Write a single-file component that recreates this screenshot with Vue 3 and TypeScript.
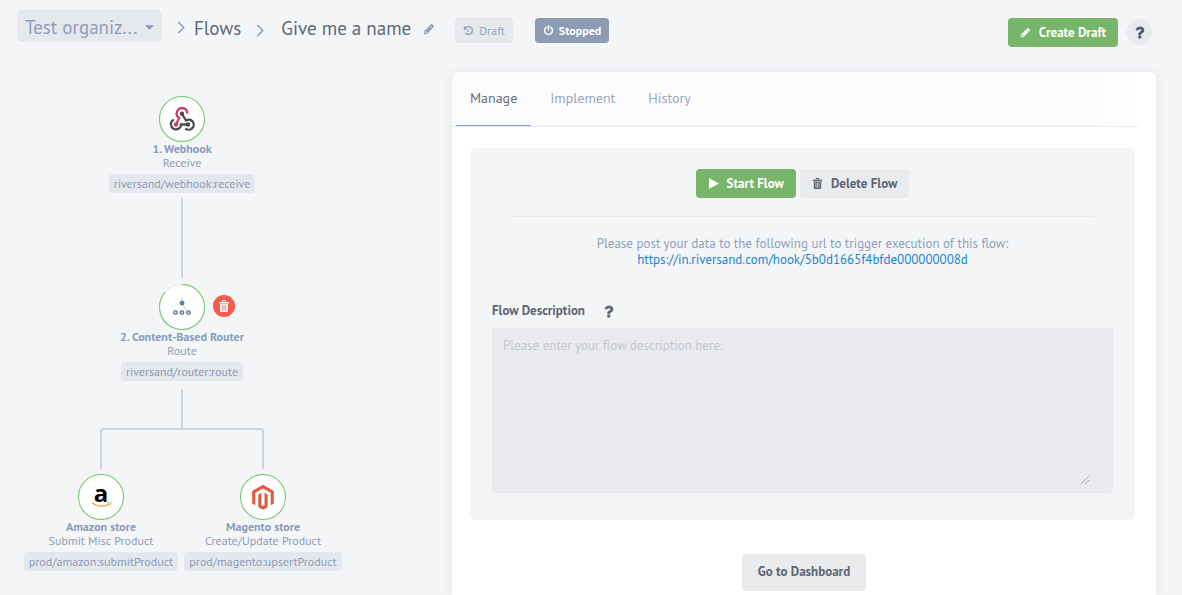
<script setup lang="ts">
import { ref } from 'vue'

interface FlowStep {
  title: string
  action: string
  component: string
  icon: 'webhook' | 'router' | 'amazon' | 'magento'
}

const steps: FlowStep[] = [
  { title: '1. Webhook', action: 'Receive', component: 'riversand/webhook:receive', icon: 'webhook' },
  { title: '2. Content-Based Router', action: 'Route', component: 'riversand/router:route', icon: 'router' },
]
const targets: FlowStep[] = [
  { title: 'Amazon store', action: 'Submit Misc Product', component: 'prod/amazon:submitProduct', icon: 'amazon' },
  { title: 'Magento store', action: 'Create/Update Product', component: 'prod/magento:upsertProduct', icon: 'magento' },
]
const rows = [[steps[0]], [steps[1]], targets]

const tabs = ['Manage', 'Implement', 'History']
const activeTab = ref('Manage')
const organization = ref('test')
const description = ref('')

const pencil = 'M491 1536l91-91-235-235-91 91v107h128v128h107zm523-928q0-22-22-22-10 0-17 7l-542 542q-7 7-7 17 0 22 22 22 10 0 17-7l542-542q7-7 7-17zm-54-192l416 416-832 832h-416v-416zm683 96q0 53-37 90l-166 166-416-416 166-165q36-38 90-38 53 0 91 38l235 234q37 39 37 91z'
const history = 'M1664 896q0 156-61 298t-164 245-245 164-298 61q-172 0-327-72.5t-264-204.5q-7-10-6.5-22.5t8.5-20.5l137-138q10-9 25-9 16 2 23 12 73 95 179 147t225 52q104 0 198.5-40.5t163.5-109.5 109.5-163.5 40.5-198.5-40.5-198.5-109.5-163.5-163.5-109.5-198.5-40.5q-98 0-188 35.5t-160 101.5l137 138q31 30 14 69-17 40-59 40h-448q-26 0-45-19t-19-45v-448q0-42 40-59 39-17 69 14l130 129q107-101 244.5-156.5t284.5-55.5q156 0 298 61t245 164 164 245 61 298zm-640-288v448q0 14-9 23t-23 9h-320q-14 0-23-9t-9-23v-64q0-14 9-23t23-9h224v-352q0-14 9-23t23-9h64q14 0 23 9t9 23z'
const power = 'M1664 896q0 156-61 298t-164 245-245 164-298 61-298-61-245-164-164-245-61-298q0-182 80.5-343t226.5-270q43-32 95.5-25t83.5 50q32 42 24.5 94.5t-49.5 84.5q-98 74-151.5 181t-53.5 228q0 104 40.5 198.5t109.5 163.5 163.5 109.5 198.5 40.5 198.5-40.5 163.5-109.5 109.5-163.5 40.5-198.5q0-121-53.5-228t-151.5-181q-42-32-49.5-84.5t24.5-94.5q31-43 84-50t95 25q146 109 226.5 270t80.5 343zm-640-768v640q0 52-38 90t-90 38-90-38-38-90v-640q0-52 38-90t90-38 90 38 38 90z'
const question = 'M1088 1256v240q0 16-12 28t-28 12h-240q-16 0-28-12t-12-28v-240q0-16 12-28t28-12h240q16 0 28 12t12 28zm316-600q0 54-15.5 101t-35 76.5-55 59.5-57.5 43.5-61 35.5q-41 23-68.5 65t-27.5 67q0 17-12 32.5t-28 15.5h-240q-15 0-25.5-18.5t-10.5-37.5v-45q0-83 65-156.5t143-108.5q59-27 84-56t25-76q0-42-46.5-74t-107.5-32q-65 0-108 29-35 25-107 115-13 16-31 16-12 0-25-8l-164-125q-13-10-15.5-25t5.5-28q160-266 464-266 80 0 161 31t146 83 106 127.5 41 158.5z'
</script>

<template>
  <div class="page">
    <header class="topbar">
      <div class="org">
        <select v-model="organization" aria-label="Organization">
          <option value="test">Test organiz...</option>
        </select>
        <svg class="caret" viewBox="0 0 10 5" aria-hidden="true"><path d="M0 0h10L5 5z" /></svg>
      </div>
      <svg class="chevron first" viewBox="0 0 8 14" aria-hidden="true"><path d="M1 1l6 6-6 6" /></svg>
      <a class="crumb" href="#flows">Flows</a>
      <svg class="chevron second" viewBox="0 0 8 14" aria-hidden="true"><path d="M1 1l6 6-6 6" /></svg>
      <h1>Give me a name</h1>
      <button class="rename" type="button" aria-label="Rename flow">
        <svg viewBox="0 0 1792 1792"><path :d="pencil" /></svg>
      </button>
      <span class="badge draft"><svg viewBox="0 0 1792 1792"><path :d="history" /></svg>Draft</span>
      <span class="badge stopped"><svg viewBox="0 0 1792 1792"><path :d="power" /></svg>Stopped</span>
      <div class="actions">
        <button class="btn green create" type="button">
          <svg viewBox="0 0 1792 1792"><path :d="pencil" /></svg>Create Draft
        </button>
        <button class="help" type="button" aria-label="Help">
          <svg viewBox="0 0 1792 1792"><path :d="question" /></svg>
        </button>
      </div>
    </header>

    <div class="body">
      <section class="tree" aria-label="Flow steps">
        <template v-for="(row, index) in rows" :key="index">
          <div v-if="index === 1" class="link"></div>
          <svg v-if="index === 2" class="fork" viewBox="0 0 324 80" aria-hidden="true">
            <path d="M162 0v40M81 80V42q0-2 2-2h158q2 0 2 2v38" />
          </svg>
          <div class="row">
            <div v-for="step in row" :key="step.title" class="step">
              <div class="disc">
                <svg v-if="step.icon === 'webhook'" viewBox="0 0 46 46">
                  <circle class="ring full" cx="23" cy="23" r="22.5" />
                  <g fill="none" stroke-width="2.3">
                    <path stroke="#d03a66" d="M28.300 17.500A5.300 5.300 0 1 0 20.300 22L17 28.300" />
                    <path stroke="#4b4b4b" d="M14.800 23.800A5 5 0 1 0 22 28.500H29" />
                    <path stroke="#4b4b4b" d="M23 18l4 6.500A5 5 0 1 1 26.300 32.300" />
                  </g>
                  <circle cx="23" cy="17.800" r="2.200" fill="#4b4b4b" />
                  <circle cx="17" cy="28.500" r="2.200" fill="#d03a66" />
                  <circle cx="29" cy="28.500" r="2.200" fill="#4b4b4b" />
                </svg>
                <svg v-else-if="step.icon === 'router'" viewBox="0 0 46 46">
                  <circle class="ring base" cx="23" cy="23" r="22.5" />
                  <path class="ring" d="M23 .5A22.500 22.500 0 1 1 6 8.300" />
                  <path d="M23 14v4M24 21l4 6" fill="none" stroke="#c5cbd5" />
                  <circle cx="23" cy="19" r="2" fill="#3498db" stroke="#557590" />
                  <g fill="#c9dce8" stroke="#4d6070" stroke-width="1.1">
                    <circle cx="16.500" cy="28.500" r="1.800" />
                    <circle cx="23" cy="28.500" r="1.800" />
                    <circle cx="29.500" cy="28.500" r="1.800" />
                  </g>
                </svg>
                <svg v-else-if="step.icon === 'amazon'" viewBox="0 0 46 46">
                  <circle class="ring full" cx="23" cy="23" r="22.5" />
                  <text x="23" y="28" text-anchor="middle" class="letter">a</text>
                  <path d="M14 29q9 6 17 1" fill="none" stroke="#f0a544" stroke-width="1.400" />
                  <path d="M29 29q3-1 4 0q0 2-2 3" fill="none" stroke="#f0a544" />
                </svg>
                <svg v-else viewBox="0 0 46 46">
                  <circle class="ring full" cx="23" cy="23" r="22.5" />
                  <path
                    fill="#de5a41"
                    transform="translate(10.500 10.800) scale(1.040)"
                    d="M12 0l10.400 6v12l-3 1.700v-12L12 3.450 4.600 7.700v12L1.600 18V6zM13.500 19.700l-1.500.85-1.500-.85v-12l-3 1.700v12L12 24l4.500-2.600v-12l-3-1.700z"
                  />
                </svg>
                <button v-if="step.icon === 'router'" class="remove" type="button" aria-label="Remove step">
                  <svg viewBox="0 0 12 12">
                    <path fill="#fff" d="M1 2h3V1q0-1 1-1h2q1 0 1 1v1h3v1.500H1zM2 4h8v7q0 1-1 1H3q-1 0-1-1zM5 1v1h2V1z" />
                    <path stroke="#fb5849" stroke-width=".7" d="M4.300 5v5.500M6 5v5.500M7.700 5v5.500" />
                  </svg>
                </button>
              </div>
              <strong>{{ step.title }}</strong>
              <span>{{ step.action }}</span>
              <code>{{ step.component }}</code>
            </div>
          </div>
        </template>
      </section>

      <main class="panel">
        <nav class="tabs" aria-label="Flow sections">
          <button
            v-for="tab in tabs"
            :key="tab"
            type="button"
            :class="{ active: tab === activeTab }"
            @click="activeTab = tab"
          >{{ tab }}</button>
        </nav>
        <section class="card">
          <div class="controls">
            <button class="btn green" type="button">
              <svg viewBox="0 0 12 12"><path d="M1 0l11 6L1 12z" /></svg>Start Flow
            </button>
            <button class="btn grey" type="button">
              <svg viewBox="0 0 12 12">
                <path d="M1 2h3V1q0-1 1-1h2q1 0 1 1v1h3v1.500H1zM2 4h8v7q0 1-1 1H3q-1 0-1-1zM5 1v1h2V1z" />
                <path stroke="#eaebed" stroke-width=".7" d="M4.300 5v5.500M6 5v5.500M7.700 5v5.500" />
              </svg>Delete Flow
            </button>
          </div>
          <hr />
          <p>
            Please post your data to the following url to trigger execution of this flow:<br />
            <a href="#hook">https://in.riversand.com/hook/5b0d1665f4bfde000000008d</a>
          </p>
          <div class="label">
            <label for="description">Flow Description</label>
            <svg viewBox="0 0 1792 1792" aria-hidden="true"><path :d="question" /></svg>
          </div>
          <div class="field">
            <textarea id="description" v-model="description" placeholder="Please enter your flow description here."></textarea>
            <svg class="grip" viewBox="0 0 8 8" aria-hidden="true"><path d="M0 8l8-8M4 8l4-4" /></svg>
          </div>
        </section>
        <button class="btn grey dashboard" type="button">Go to Dashboard</button>
      </main>
    </div>
  </div>
</template>

<style>
body {
  background: #f4f5f7;
}
</style>

<style scoped>
* {
  box-sizing: border-box;
}
.page {
  min-height: 100vh;
  display: flex;
  flex-direction: column;
  overflow: hidden;
  background: #f4f5f7;
  color: #8d9cb8;
  font-family: 'PT Sans', Lato, 'Noto Sans', sans-serif;
  font-size: 14px;
}
svg {
  display: block;
  flex: none;
  fill: currentColor;
}
button,
select,
textarea {
  margin: 0;
  border: 0;
  font: inherit;
}
button {
  cursor: pointer;
  white-space: nowrap;
}
a {
  text-decoration: none;
}
.topbar {
  display: flex;
  align-items: center;
  height: 60px;
  padding: 0 30px 0 17px;
}
.org {
  position: relative;
  margin-bottom: 8px;
}
.org select {
  appearance: none;
  width: 145px;
  height: 32px;
  padding: 2px 24px 0 8px;
  border-radius: 5px;
  background: #e5e8ed;
  color: #8d9fbd;
  font-size: 19px;
}
.caret {
  position: absolute;
  right: 8px;
  top: 15px;
  width: 9px;
  height: 5px;
  color: #8299bf;
}
.chevron {
  width: 8px;
  height: 13px;
  fill: none;
  stroke: #8299bf;
  stroke-width: 1.5;
}
.first {
  margin: 0 9px 6px 15px;
}
.second {
  margin: 0 17px 0 15px;
}
.crumb,
h1 {
  margin: 0;
  padding-bottom: 5px;
  color: #5f6878;
  font-size: 19px;
  font-weight: 400;
  line-height: 24px;
  white-space: nowrap;
}
.rename {
  margin-left: 12px;
  padding: 0 0 2px;
  background: none;
  color: #8d9cb8;
}
.rename svg {
  width: 12px;
  height: 12px;
}
.badge {
  display: flex;
  align-items: center;
  gap: 5px;
  height: 25px;
  padding: 0 8px;
  border-radius: 4px;
  font-size: 12px;
}
.badge svg {
  width: 11px;
  height: 11px;
}
.draft {
  margin-left: 20px;
  background: #e6e8ec;
  color: #98a5bb;
}
.stopped {
  margin-left: 22px;
  background: #8d9bb4;
  color: #fff;
  font-weight: 700;
}
.actions {
  display: flex;
  align-items: center;
  gap: 8px;
  margin-left: auto;
  padding-top: 4px;
}
.btn {
  display: flex;
  align-items: center;
  justify-content: center;
  gap: 8px;
  height: 29px;
  padding: 0 12px;
  border-radius: 4px;
  font-size: 13px;
  font-weight: 700;
}
.btn svg {
  width: 11px;
  height: 11px;
}
.green {
  background: #77b56b;
  color: #fff;
}
.grey {
  background: #eaebed;
  color: #5d6678;
}
.help {
  display: flex;
  align-items: center;
  justify-content: center;
  width: 26px;
  height: 26px;
  padding: 0;
  border-radius: 50%;
  background: #e8eaed;
  color: #4f5b70;
}
.help svg {
  width: 17px;
  height: 17px;
}
.body {
  display: flex;
  flex: 1;
  align-items: stretch;
  padding: 12px 26px 0 20px;
}
.tree {
  flex: none;
  width: 324px;
  margin-right: 108px;
  padding-top: 24px;
}
.row {
  display: flex;
}
.step {
  display: flex;
  flex: 1;
  flex-direction: column;
  align-items: center;
  font-size: 12px;
  line-height: 14px;
  white-space: nowrap;
}
.disc {
  position: relative;
  width: 46px;
  height: 46px;
  border-radius: 50%;
  background: #fff;
}
.disc > svg {
  width: 46px;
  height: 46px;
}
.ring {
  fill: none;
  stroke: #7ccb7c;
  stroke-width: 1.2;
}
.base {
  stroke: #e3e6ec;
}
.letter {
  fill: #000;
  font: 700 24px 'Open Sans', sans-serif;
}
.step strong {
  color: #8a9bbb;
}
.step code {
  height: 19px;
  margin-top: 4px;
  padding: 0 5px;
  border-radius: 4px;
  background: #e4e7ed;
  font: inherit;
  line-height: 19px;
}
.remove {
  position: absolute;
  left: 54px;
  top: 11px;
  display: flex;
  align-items: center;
  justify-content: center;
  width: 22px;
  height: 22px;
  padding: 0;
  border-radius: 50%;
  background: #fb5849;
}
.remove svg {
  width: 12px;
  height: 12px;
}
.link {
  width: 2px;
  height: 80px;
  margin: 5px auto 6px;
  background: #ccd3df;
}
.fork {
  width: 324px;
  height: 80px;
  margin: 8px 0 5px;
  fill: none;
  stroke: #ccd3df;
  stroke-width: 2;
}
.panel {
  flex: 1;
  min-width: 0;
  padding-bottom: 4px;
  border-radius: 6px 6px 0 0;
  background: #fff;
  box-shadow: 0 0 10px rgba(60, 70, 90, 0.08);
}
.tabs {
  display: flex;
  gap: 5px;
  height: 55px;
  margin-right: 18px;
  padding-left: 4px;
  border-bottom: 1px solid #e8e9f0;
  border-radius: 6px 0 0;
  background: linear-gradient(90deg, #fbfbfb 92%, #fff);
}
.tabs button {
  padding: 0 14px 2px;
  border-bottom: 1px solid transparent;
  background: none;
  color: #9aa7be;
}
.tabs .active {
  border-color: #7ba3dc;
  color: #687182;
}
.card {
  margin: 21px 21px 34px 18px;
  padding: 21px 22px 27px;
  border-radius: 6px;
  background: #f4f5f7;
}
.controls {
  display: flex;
  justify-content: center;
  gap: 4px;
}
hr {
  height: 1px;
  margin: 18px 18px 19px;
  border: 0;
  background: #e7e9ec;
}
p {
  margin: 0;
  color: #8da0bd;
  font-size: 13px;
  line-height: 16px;
  text-align: center;
}
p a {
  color: #1686cf;
}
.label {
  display: flex;
  align-items: center;
  gap: 15px;
  margin: 33px 0 7px;
  color: #5d6678;
  font-size: 13px;
  font-weight: 700;
  line-height: 20px;
}
.label svg {
  width: 17px;
  height: 17px;
}
.field {
  position: relative;
}
textarea {
  display: block;
  width: 100%;
  height: 165px;
  padding: 9px 11px;
  border-radius: 4px;
  outline: 0;
  resize: none;
  background: #eaeaee;
  color: #5d6678;
  font-size: 13px;
  line-height: 18px;
}
textarea::placeholder {
  color: #c2c9d4;
  opacity: 1;
}
.grip {
  position: absolute;
  right: 24px;
  bottom: 9px;
  width: 8px;
  height: 8px;
  fill: none;
  stroke: #a9adb5;
}
.dashboard {
  height: 37px;
  margin: 0 auto;
  padding: 0 16px 2px;
}
</style>
